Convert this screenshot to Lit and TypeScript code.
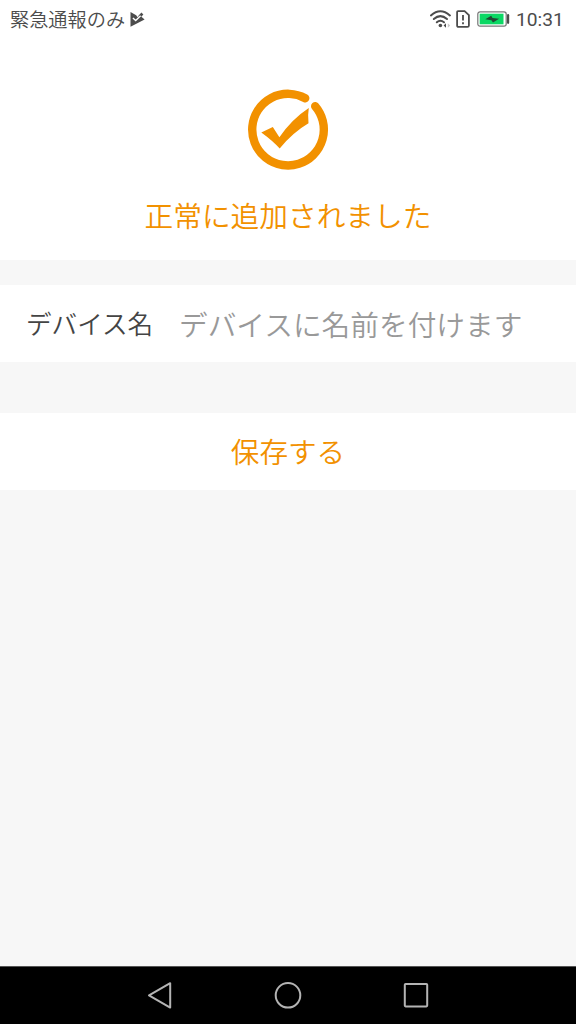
import { LitElement, html, css } from "lit";
import { customElement } from "lit/decorators.js";

@customElement("status-bar")
class StatusBar extends LitElement {
  static styles = css`
    :host {
      display: flex;
      align-items: center;
      height: 38px;
      padding: 0 13px 0 10px;
      color: #4c4c4c;
      box-sizing: border-box;
      line-height: 38px;
    }
    svg { display: block; flex: none; }
    .carrier { font-size: 19.2px; white-space: nowrap; }
    .play { margin-left: 5px; }
    .spacer { flex: 1; }
    .wifi { margin-right: 3px; }
    .sim { margin-right: 7px; }
    .battery { margin-right: 6px; }
    .clock { font-family: Roboto, sans-serif; font-weight: 400; font-size: 19.2px; width: 47px; white-space: nowrap; padding-top: 2px; }
  `;
  render() {
    return html`
      <span class="carrier">緊急通報のみ</span>
      <svg class="play" width="15" height="16" viewBox="0 0 15 16">
        <path d="M0.5 1 L6.2 4.2 L7.4 6 L10 4.6 L14.6 8.6 L0.5 15.8 Z" fill="#4c4c4c" />
        <path d="M8 5.2 L11.4 1.6 L13.4 3.4 L11 6 Z" fill="#4c4c4c" />
        <path d="M2.9 7 L5.7 9.6 L10.6 4.8" fill="none" stroke="#fff" stroke-width="1.4" />
      </svg>
      <div class="spacer"></div>
      <svg class="wifi" width="23" height="20" viewBox="0 0 23 20">
        <g fill="none" stroke="#4c4c4c" stroke-width="2" stroke-linecap="round">
          <path d="M0.9 6.4 Q10.4 -2 19.9 6.4" />
          <path d="M3.8 10 Q10.4 4.2 17 10" />
          <path d="M6.8 13.3 Q10.4 10.2 14 13.3" />
        </g>
        <circle cx="10.4" cy="16.5" r="1.8" fill="#4c4c4c" />
        <path d="M16 14.2 V18.8 L13.6 16.5 Z" fill="#4c4c4c" />
        <path d="M17.8 14.2 V18.8 L20.2 16.5 Z" fill="#c8c8c8" />
      </svg>
      <svg class="sim" width="14" height="18" viewBox="0 0 14 18">
        <path d="M2 1.1 H8.6 L12.9 5.2 V15.4 Q12.9 16.9 11.4 16.9 H2.6 Q1.1 16.9 1.1 15.4 V2 Q1.1 1.1 2 1.1 Z" fill="none" stroke="#4c4c4c" stroke-width="1.8" />
        <path d="M7 5 V10.4 M7 12.2 V14.2" stroke="#4c4c4c" stroke-width="1.8" />
      </svg>
      <svg class="battery" width="33" height="16" viewBox="0 0 33 16">
        <rect x="0.8" y="0.8" width="28.4" height="14.4" rx="2.2" fill="#fff" stroke="#777" stroke-width="1.2" />
        <rect x="2.7" y="2.7" width="23.8" height="10.6" fill="#0bd864" />
        <path d="M8.3 8.2 L14.2 4.8 L15.6 7 L22.1 7.8 L16 11.4 L14.4 9.2 Z" fill="#214a35" />
        <path d="M31.1 4.2 V11.8" stroke="#4c4c4c" stroke-width="2.2" stroke-linecap="round" />
      </svg>
      <span class="clock">10:31</span>
    `;
  }
}

@customElement("nav-bar")
class NavBar extends LitElement {
  static styles = css`
    :host {
      display: flex;
      justify-content: center;
      align-items: center;
      gap: 96px;
      height: 58px;
      box-sizing: border-box;
      border-top: 1px solid #555;
      background: #000;
    }
    svg { display: block; fill: none; stroke: #b4b4b4; stroke-width: 2; stroke-linejoin: round; }
  `;
  render() {
    return html`
      <svg width="32" height="32" viewBox="0 0 32 32"><path d="M26.2 3.2 V27.6 L5 15.4 Z" /></svg>
      <svg width="32" height="32" viewBox="0 0 32 32"><circle cx="16" cy="15.3" r="12.3" /></svg>
      <svg width="32" height="32" viewBox="0 0 32 32"><rect x="4.8" y="4" width="22.4" height="22.4" rx=".8" /></svg>
    `;
  }
}

@customElement("app-root")
class AppRoot extends LitElement {
  static styles = css`
    :host {
      display: flex;
      flex-direction: column;
      height: 1024px;
      background: #f7f7f7;
      font-family: "Noto Sans CJK JP", sans-serif;
      font-weight: 350;
    }
    .result {
      height: 260px;
      background: #fff;
      display: flex;
      flex-direction: column;
    }
    .done { display: block; align-self: center; margin-top: 49px; }
    .message {
      margin-top: 17px;
      text-align: center;
      font-size: 28.7px;
      line-height: 50px;
      color: #f29100;
    }
    .row {
      display: flex;
      align-items: center;
      height: 77px;
      margin-top: 25px;
      padding: 0 26px;
      background: #fff;
      box-sizing: border-box;
    }
    .label { font-size: 25.6px; line-height: 40px; color: #444; white-space: nowrap; width: 153px; padding-bottom: 2px; }
    .name {
      flex: 1;
      min-width: 0;
      height: 60px;
      border: 0;
      padding: 0 0 1px;
      outline: 0;
      background: none;
      font: 350 28.7px "Noto Sans CJK JP", sans-serif;
      color: #444;
    }
    .name::placeholder { color: #999; opacity: 1; }
    .save {
      display: block;
      height: 77px;
      margin-top: 51px;
      padding: 0 0 2px;
      border: 0;
      background: #fff;
      color: #f29100;
      font: 350 28.6px "Noto Sans CJK JP", sans-serif;
    }
    .fill { flex: 1; }
  `;
  render() {
    return html`
      <section class="result">
        <status-bar></status-bar>
        <svg class="done" width="86" height="86" viewBox="245 87 86 86">
          <path d="M305.2 98.2 A35.8 35.8 0 1 0 315.2 106.3" fill="none" stroke="#f29100" stroke-width="8.4" stroke-linecap="round" />
          <path d="M261.3 132.4 L272.8 127 L279.4 137.2 Q292 119 308.8 108 Q307.6 115 308.5 123.3 Q293 132.4 279.7 148.4 Q272.5 140.5 261.3 132.4 Z" fill="#f29100" />
        </svg>
        <div class="message">正常に追加されました</div>
      </section>
      <div class="row">
        <span class="label">デバイス名</span>
        <input class="name" placeholder="デバイスに名前を付けます" />
      </div>
      <button class="save">保存する</button>
      <div class="fill"></div>
      <nav-bar></nav-bar>
    `;
  }
}
